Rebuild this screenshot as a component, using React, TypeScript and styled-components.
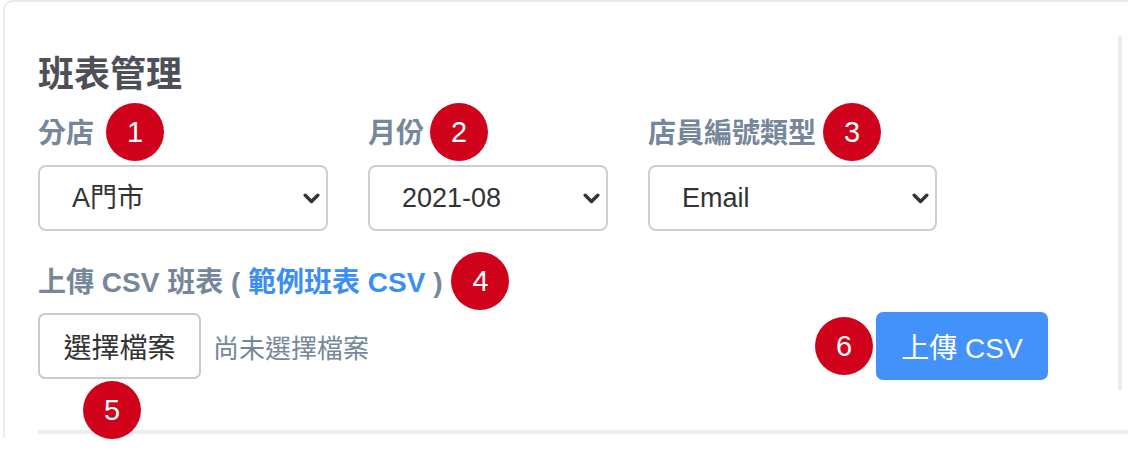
import React from "react";
import styled, { createGlobalStyle } from "styled-components";

const GlobalStyle = createGlobalStyle`
  html, body { margin: 0; padding: 0; background: #fff; overflow: hidden; }
  body { font-family: "Liberation Sans", "Noto Sans CJK TC", sans-serif; }
`;

const Page = styled.div`
  width: 1128px;
  height: 458px;
  overflow: hidden;
`;

const Card = styled.section`
  box-sizing: border-box;
  margin-left: 3px;
  width: 1160px;
  height: 438px;
  border-top: 2px solid #e8e8ed;
  border-left: 2px solid #ebebef;
  border-top-left-radius: 10px;
  padding: 34px 0 0 33px;
`;

const Panel = styled.div`
  position: relative;
  box-sizing: border-box;
  width: 1084px;
  height: 354px;
  border-right: 4px solid #ececec;
  padding-top: 17px;
`;

const Title = styled.h2`
  margin: 0;
  font-size: 36px;
  line-height: 44px;
  font-weight: 700;
  color: #4d5056;
`;

const FieldRow = styled.div`
  display: flex;
  gap: 40px;
  margin-top: 19px;
`;

const Field = styled.div<{ $w: number }>`
  width: ${(p) => p.$w}px;
  display: flex;
  flex-direction: column;
`;

const LabelLine = styled.div<{ $mt?: number }>`
  display: flex;
  align-items: center;
  height: 36px;
  margin-top: ${(p) => p.$mt ?? 0}px;
`;

const Label = styled.label`
  font-size: 28px;
  line-height: 36px;
  font-weight: 700;
  color: #76879b;
  white-space: pre;
`;

const Badge = styled.span`
  flex: none;
  width: 58px;
  height: 58px;
  border-radius: 50%;
  background: #d0021b;
  color: #fff;
  font-family: "Liberation Sans", sans-serif;
  font-size: 29px;
  display: flex;
  align-items: center;
  justify-content: center;
`;

const LabelBadge = styled(Badge)<{ $ml: number }>`
  margin: -13px 0 -9px ${(p) => p.$ml}px;
`;

const FloatBadge = styled(Badge)`
  position: absolute;
  left: 45px;
  top: 68px;
`;

const SelectWrap = styled.div`
  position: relative;
  margin-top: 13px;
`;

const Select = styled.select`
  appearance: none;
  -webkit-appearance: none;
  box-sizing: border-box;
  width: 100%;
  height: 66px;
  border: 2px solid #cfcfcf;
  border-radius: 8px;
  background: #fff;
  padding: 0 40px 0 32px;
  font-family: inherit;
  font-size: 27px;
  color: #333;
  outline: none;
`;

const Chevron = styled.svg`
  position: absolute;
  right: 8px;
  top: 28px;
  width: 17px;
  height: 11px;
  pointer-events: none;
`;

const Link = styled.a`
  color: #3d8ef2;
  text-decoration: none;
`;

const FileRow = styled.div`
  display: flex;
  align-items: center;
  justify-content: space-between;
  width: 1010px;
  margin-top: 11px;
`;

const FilePicker = styled.div`
  display: flex;
  align-items: center;
  gap: 12px;
`;

const FileButtonWrap = styled.div`
  position: relative;
`;

const FileButton = styled.button`
  box-sizing: border-box;
  width: 163px;
  height: 66px;
  border: 2px solid #cacaca;
  border-radius: 7px;
  background: #fff;
  font-family: inherit;
  font-size: 28px;
  color: #333;
  padding: 0;
`;

const FileName = styled.span`
  font-size: 26px;
  color: #76879b;
`;

const SubmitGroup = styled.div`
  display: flex;
  align-items: center;
  gap: 3px;
`;

const SubmitButton = styled.button`
  width: 172px;
  height: 68px;
  border: none;
  border-radius: 7px;
  background: #4392f9;
  color: #fff;
  font-family: inherit;
  font-size: 28px;
  padding: 0;
`;

const Divider = styled.hr`
  margin: 40px 0 0 0;
  border: none;
  height: 4px;
  background: #eeeeee;
`;

const ChevronIcon = () => (
  <Chevron viewBox="0 0 17 11">
    <path d="M2.2 2.2 L8.5 8.5 L14.8 2.2" fill="none" stroke="#333" strokeWidth="3.4" strokeLinecap="round" strokeLinejoin="round" />
  </Chevron>
);

const fields = [
  { label: "分店", badge: "1", ml: 12, w: 290, options: ["A門市", "B門市"] },
  { label: "月份", badge: "2", ml: 6, w: 240, options: ["2021-08", "2021-09"] },
  { label: "店員編號類型", badge: "3", ml: 7, w: 289, options: ["Email", "員工編號"] },
];

export default function App() {
  return (
    <Page>
      <GlobalStyle />
      <Card>
        <Panel>
          <Title>班表管理</Title>
          <FieldRow>
            {fields.map((f) => (
              <Field key={f.label} $w={f.w}>
                <LabelLine>
                  <Label>{f.label}</Label>
                  <LabelBadge $ml={f.ml}>{f.badge}</LabelBadge>
                </LabelLine>
                <SelectWrap>
                  <Select defaultValue={f.options[0]}>
                    {f.options.map((o) => (
                      <option key={o}>{o}</option>
                    ))}
                  </Select>
                  <ChevronIcon />
                </SelectWrap>
              </Field>
            ))}
          </FieldRow>
          <LabelLine $mt={34}>
            <Label>
              {"上傳 CSV 班表 ( "}
              <Link href="#">範例班表 CSV</Link>
              {" )"}
            </Label>
            <LabelBadge $ml={9}>4</LabelBadge>
          </LabelLine>
          <FileRow>
            <FilePicker>
              <FileButtonWrap>
                <FileButton>選擇檔案</FileButton>
                <FloatBadge>5</FloatBadge>
              </FileButtonWrap>
              <FileName>尚未選擇檔案</FileName>
            </FilePicker>
            <SubmitGroup>
              <Badge>6</Badge>
              <SubmitButton>上傳 CSV</SubmitButton>
            </SubmitGroup>
          </FileRow>
        </Panel>
        <Divider />
      </Card>
    </Page>
  );
}
